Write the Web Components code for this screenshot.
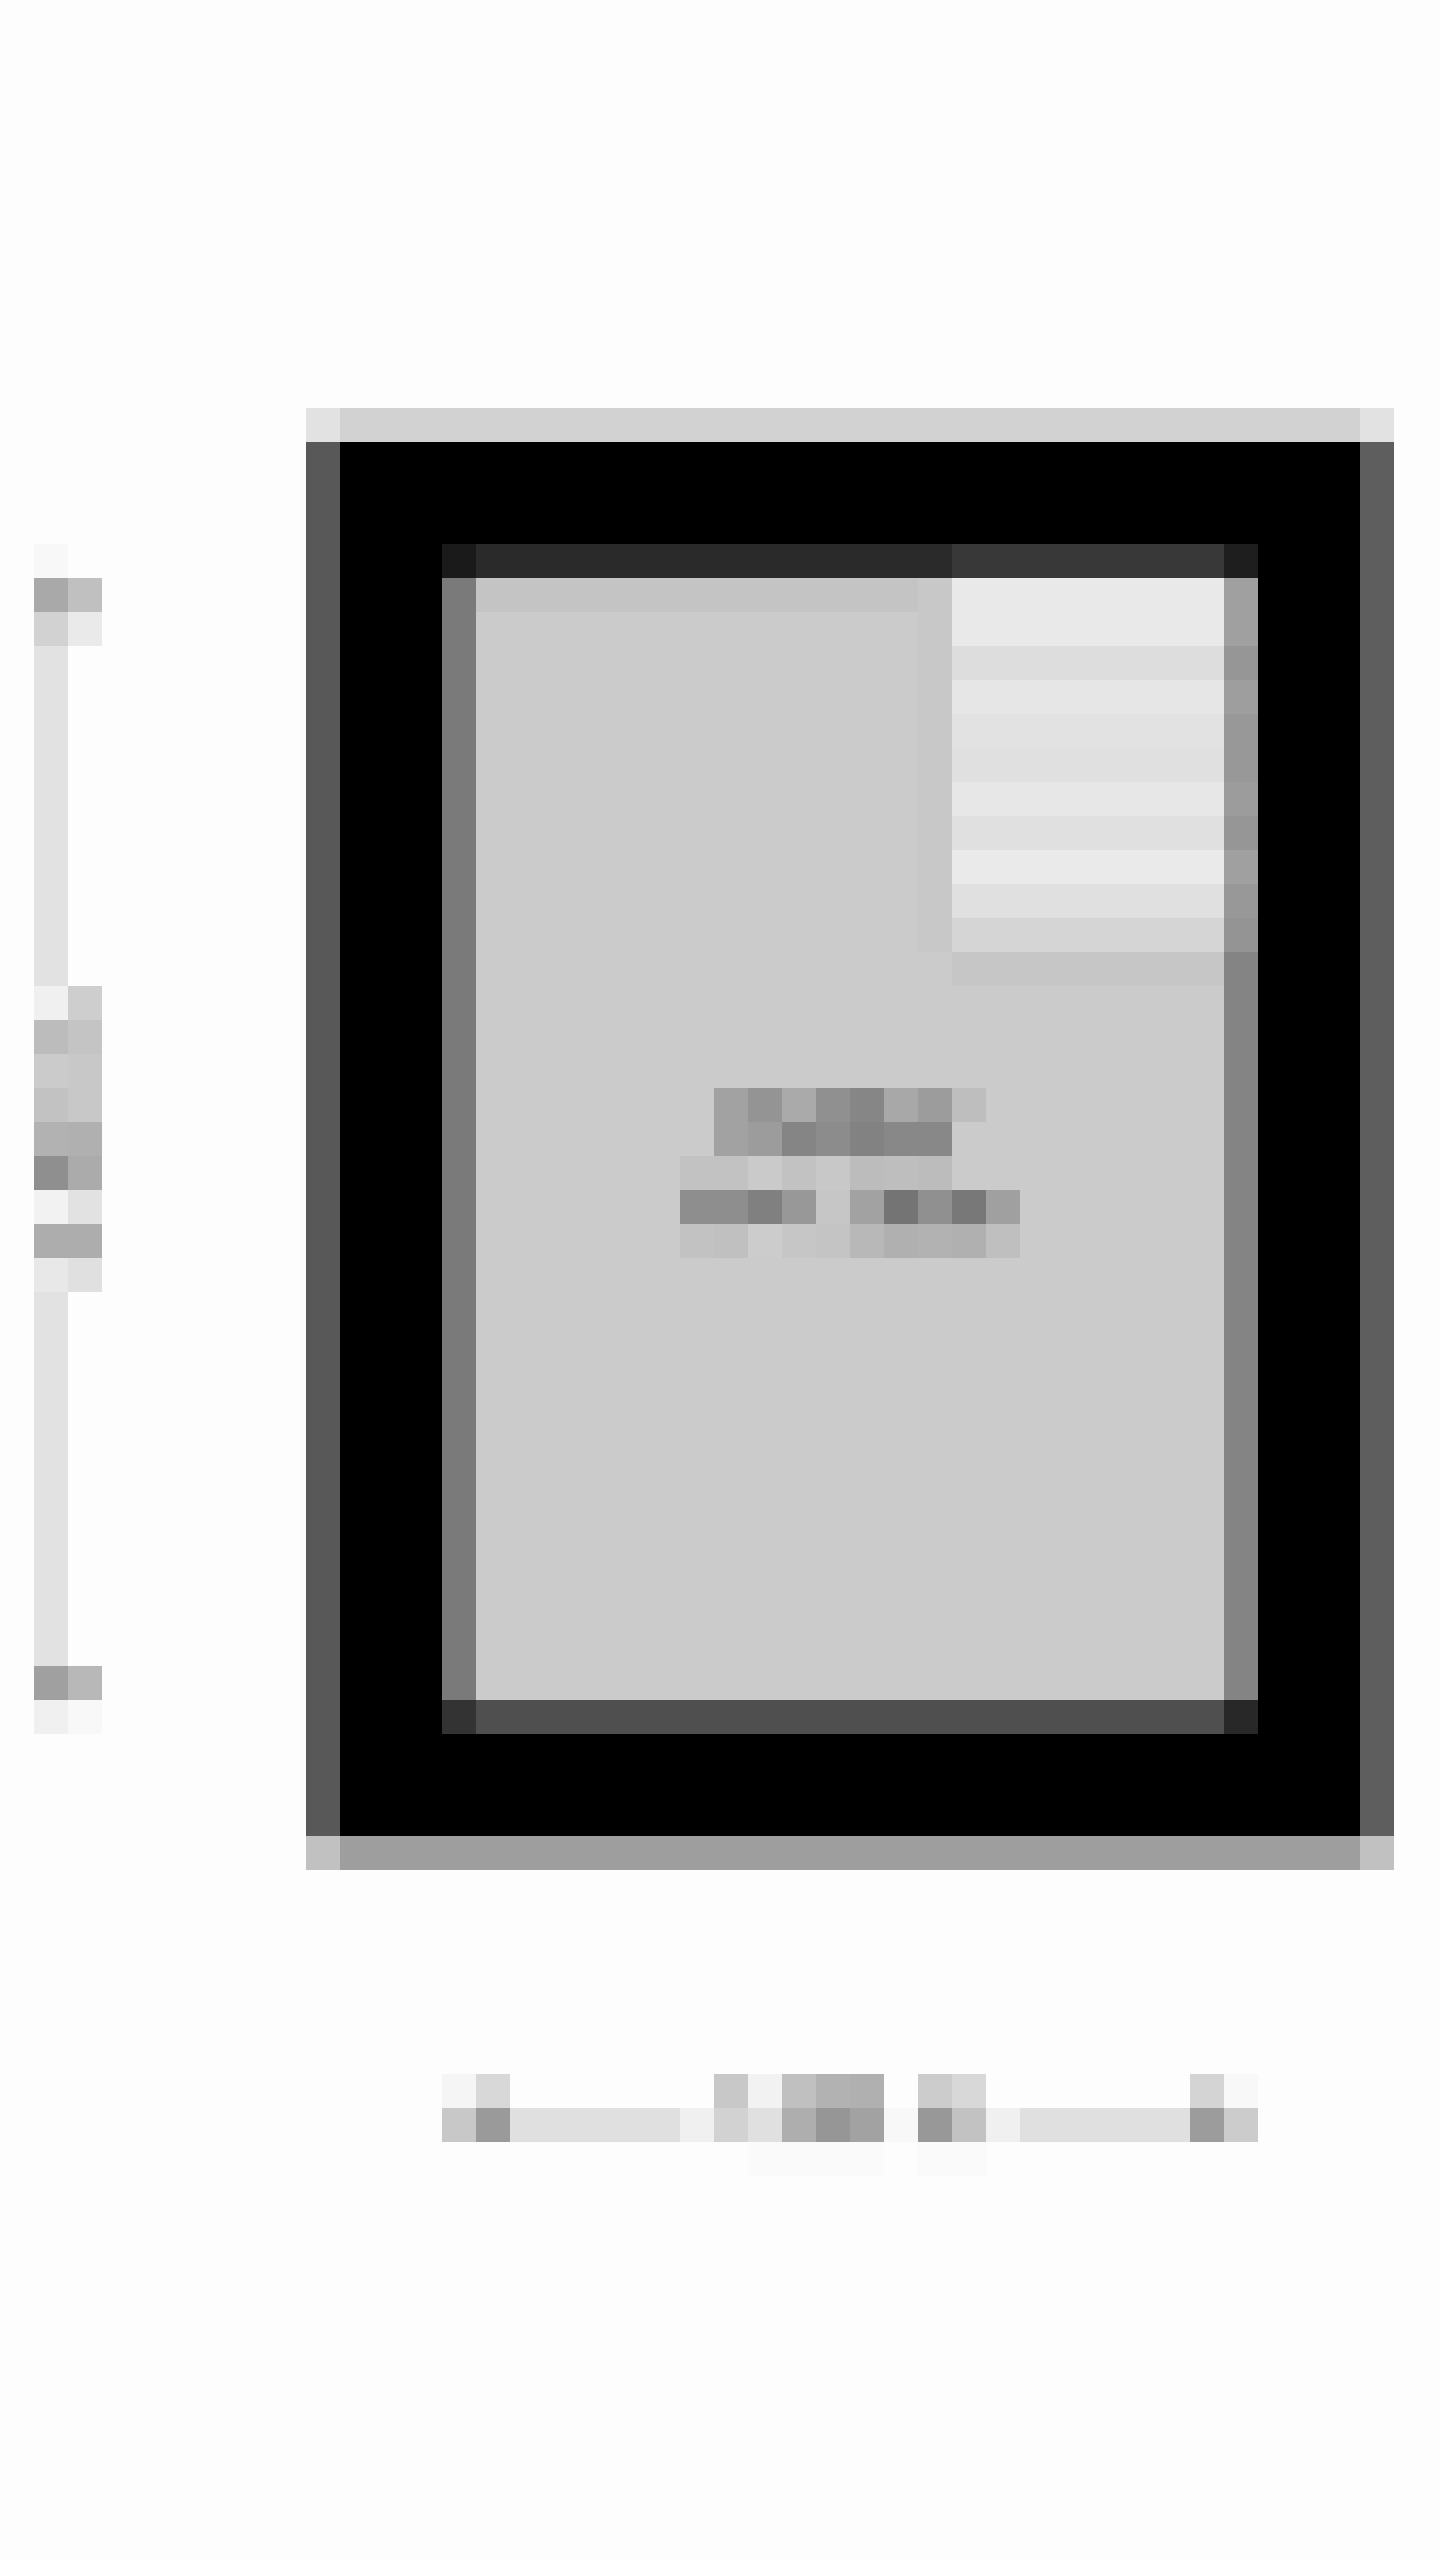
<!DOCTYPE html>
<html lang="en">
<head>
<meta charset="utf-8">
<title>Dialog</title>
<style>
  html, body { margin: 0; background: #fdfdfd; font-family: "Liberation Sans", Arial, sans-serif; }
</style>
</head>
<body>
<page-shell>
  <side-rail slot="rail"></side-rail>
  <device-frame slot="frame">
    <dialog-panel>
      <menu-edge slot="edge"></menu-edge>
      <menu-patch slot="menu"></menu-patch>
      <title-blur slot="title"></title-blur>
    </dialog-panel>
  </device-frame>
  <bottom-bar slot="bar"></bottom-bar>
</page-shell>

<script>
const CELL = 34;

// "e2*3 fd" -> ["#e2e2e2", "#e2e2e2", "#e2e2e2", "#fdfdfd"], "--" stays see-through
function expandRow(row) {
  const out = [];
  row.trim().split(/\s+/).forEach((token) => {
    const [tone, count] = token.split("*");
    const color = tone === "--" ? "transparent" : `#${tone}${tone}${tone}`;
    for (let i = 0; i < Number(count || 1); i++) out.push(color);
  });
  return out;
}

// Base for the blurred blocks: each subclass just lists its rows of tones
class ToneBlock extends HTMLElement {
  static rows = [];

  constructor() {
    super();
    this.attachShadow({ mode: "open" });
    const rows = this.constructor.rows.map(expandRow);
    const cols = Math.max(...rows.map((r) => r.length));
    const cells = rows
      .map((r) => {
        const filled = r.concat(Array(cols - r.length).fill("transparent"));
        return filled.map((c) => `<i style="background:${c}"></i>`).join("");
      })
      .join("");
    this.shadowRoot.innerHTML = `
      <style>
        :host {
          display: grid;
          grid-template-columns: repeat(${cols}, ${CELL}px);
          grid-auto-rows: ${CELL}px;
        }
        i { display: block; }
      </style>
      ${cells}`;
  }
}

customElements.define("side-rail", class SideRail extends ToneBlock {
  static rows = [
    "f8 fd", "a9 c0", "d2 ea",
    ...Array(10).fill("e2 fd"),
    "f0 ce", "bc c4", "cb c8", "c2 c8", "b2 b0", "8f ab", "f2 e2", "ad ad", "e8 e0",
    ...Array(11).fill("e2 fd"),
    "a0 b8", "f0 f8",
  ];
});

customElements.define("menu-patch", class MenuPatch extends ToneBlock {
  static rows = [
    "e9*8", "e9*8", "dd*8", "e6*8", "e2*8", "e0*8",
    "e7*8", "e0*8", "ea*8", "e0*8", "d5*8", "c6*8",
  ];
});

// right edge of the panel next to the menu, it picks up the menu's bands
customElements.define("menu-edge", class MenuEdge extends ToneBlock {
  static rows = ["a0", "a0", "96", "9e", "98", "98", "9c", "96", "a0", "98", "94"];
});

customElements.define("title-blur", class TitleBlur extends ToneBlock {
  static rows = [
    "-- a2 94 aa 90 86 a8 9c be",
    "-- a2 9c 85 8c 82 88 88",
    "c2 c2 ca c2 c8 bc be bc",
    "8e 8e 80 98 c6 a2 74 90 78 a0",
    "c2 c0 cc c6 c4 b8 b0 b2 b0 bf",
  ];
});

customElements.define("bottom-bar", class BottomBar extends ToneBlock {
  static rows = [
    "f5 d8 fd*6 c8 f2 c0 b2 b0 fd cc d8 fd*6 d4 f8",
    "c8 9a e0*5 f0 d2 e0 ae 96 a2 f8 98 c2 f0 e0*5 9c cc",
    "fd*9 fa*4 fd fa*2 fd*8",
  ];
});

const panelTemplate = document.createElement("template");
panelTemplate.innerHTML = `
  <style>
    :host {
      display: grid;
      grid-template-columns: ${CELL}px 1fr ${CELL}px;
      grid-template-rows: ${CELL}px 1fr ${CELL}px;
      width: ${CELL * 24}px;
      height: ${CELL * 35}px;
    }
    .top { grid-column: 1 / -1; display: flex; background: #2a2a2a; }
    .top .fill { flex: 1; }
    .top .menu-edge { width: ${CELL * 8}px; background: #383838; }
    .top .corner-l { width: ${CELL}px; background: #1a1a1a; }
    .top .corner-r { width: ${CELL}px; background: #1e1e1e; }
    .left { background: #7a7a7a; }
    .right { background: #848484; }
    .body {
      display: grid;
      grid-template-columns: repeat(22, ${CELL}px);
      grid-template-rows: repeat(33, ${CELL}px);
      background: #cbcbcb;
    }
    .shade-top { grid-column: 1 / 14; grid-row: 1; background: #c4c4c4; }
    .shade-side { grid-column: 14; grid-row: 1 / 12; background: #c8c8c8; }
    ::slotted([slot="menu"]) { grid-column: 15 / 23; grid-row: 1 / 13; }
    ::slotted([slot="title"]) { grid-column: 7 / 17; grid-row: 16 / 21; }
    .bottom { grid-column: 1 / -1; display: flex; background: #4f4f4f; }
    .bottom .fill { flex: 1; }
    .bottom .corner-l { width: ${CELL}px; background: #333333; }
    .bottom .corner-r { width: ${CELL}px; background: #282828; }
  </style>
  <div class="top"><div class="corner-l"></div><div class="fill"></div><div class="menu-edge"></div><div class="corner-r"></div></div>
  <div class="left"></div>
  <div class="body">
    <div class="shade-top"></div>
    <div class="shade-side"></div>
    <slot name="menu"></slot>
    <slot name="title"></slot>
  </div>
  <div class="right"><slot name="edge"></slot></div>
  <div class="bottom"><div class="corner-l"></div><div class="fill"></div><div class="corner-r"></div></div>
`;

customElements.define("dialog-panel", class DialogPanel extends HTMLElement {
  constructor() {
    super();
    this.attachShadow({ mode: "open" });
    this.shadowRoot.appendChild(panelTemplate.content.cloneNode(true));
  }
});

const frameTemplate = document.createElement("template");
frameTemplate.innerHTML = `
  <style>
    :host {
      display: grid;
      grid-template-columns: ${CELL}px auto ${CELL}px;
      grid-template-rows: ${CELL}px auto ${CELL}px;
      width: ${CELL * 32}px;
    }
    .top, .bottom { grid-column: 1 / -1; display: flex; }
    .top { background: #d2d2d2; }
    .bottom { background: #9e9e9e; }
    .fill { flex: 1; }
    .corner { width: ${CELL}px; }
    .top .corner { background: #e2e2e2; }
    .bottom .corner { background: #c1c1c1; }
    .left { background: #585858; }
    .right { background: #5e5e5e; }
    .inner { background: #000; padding: ${CELL * 3}px; }
  </style>
  <div class="top"><div class="corner"></div><div class="fill"></div><div class="corner"></div></div>
  <div class="left"></div>
  <div class="inner"><slot></slot></div>
  <div class="right"></div>
  <div class="bottom"><div class="corner"></div><div class="fill"></div><div class="corner"></div></div>
`;

customElements.define("device-frame", class DeviceFrame extends HTMLElement {
  constructor() {
    super();
    this.attachShadow({ mode: "open" });
    this.shadowRoot.appendChild(frameTemplate.content.cloneNode(true));
  }
});

const shellTemplate = document.createElement("template");
shellTemplate.innerHTML = `
  <style>
    :host {
      display: grid;
      width: 1440px;
      height: 2560px;
      grid-template-columns: repeat(42, ${CELL}px);
      grid-template-rows: repeat(75, ${CELL}px);
      background: #fdfdfd;
      overflow: hidden;
    }
    ::slotted([slot="rail"]) { grid-column: 2 / 4; grid-row: 17 / 52; }
    ::slotted([slot="frame"]) { grid-column: 10 / 42; grid-row: 13 / 56; }
    ::slotted([slot="bar"]) { grid-column: 14 / 38; grid-row: 62 / 65; }
  </style>
  <slot name="rail"></slot>
  <slot name="frame"></slot>
  <slot name="bar"></slot>
`;

customElements.define("page-shell", class PageShell extends HTMLElement {
  constructor() {
    super();
    this.attachShadow({ mode: "open" });
    this.shadowRoot.appendChild(shellTemplate.content.cloneNode(true));
  }
});
</script>
</body>
</html>
